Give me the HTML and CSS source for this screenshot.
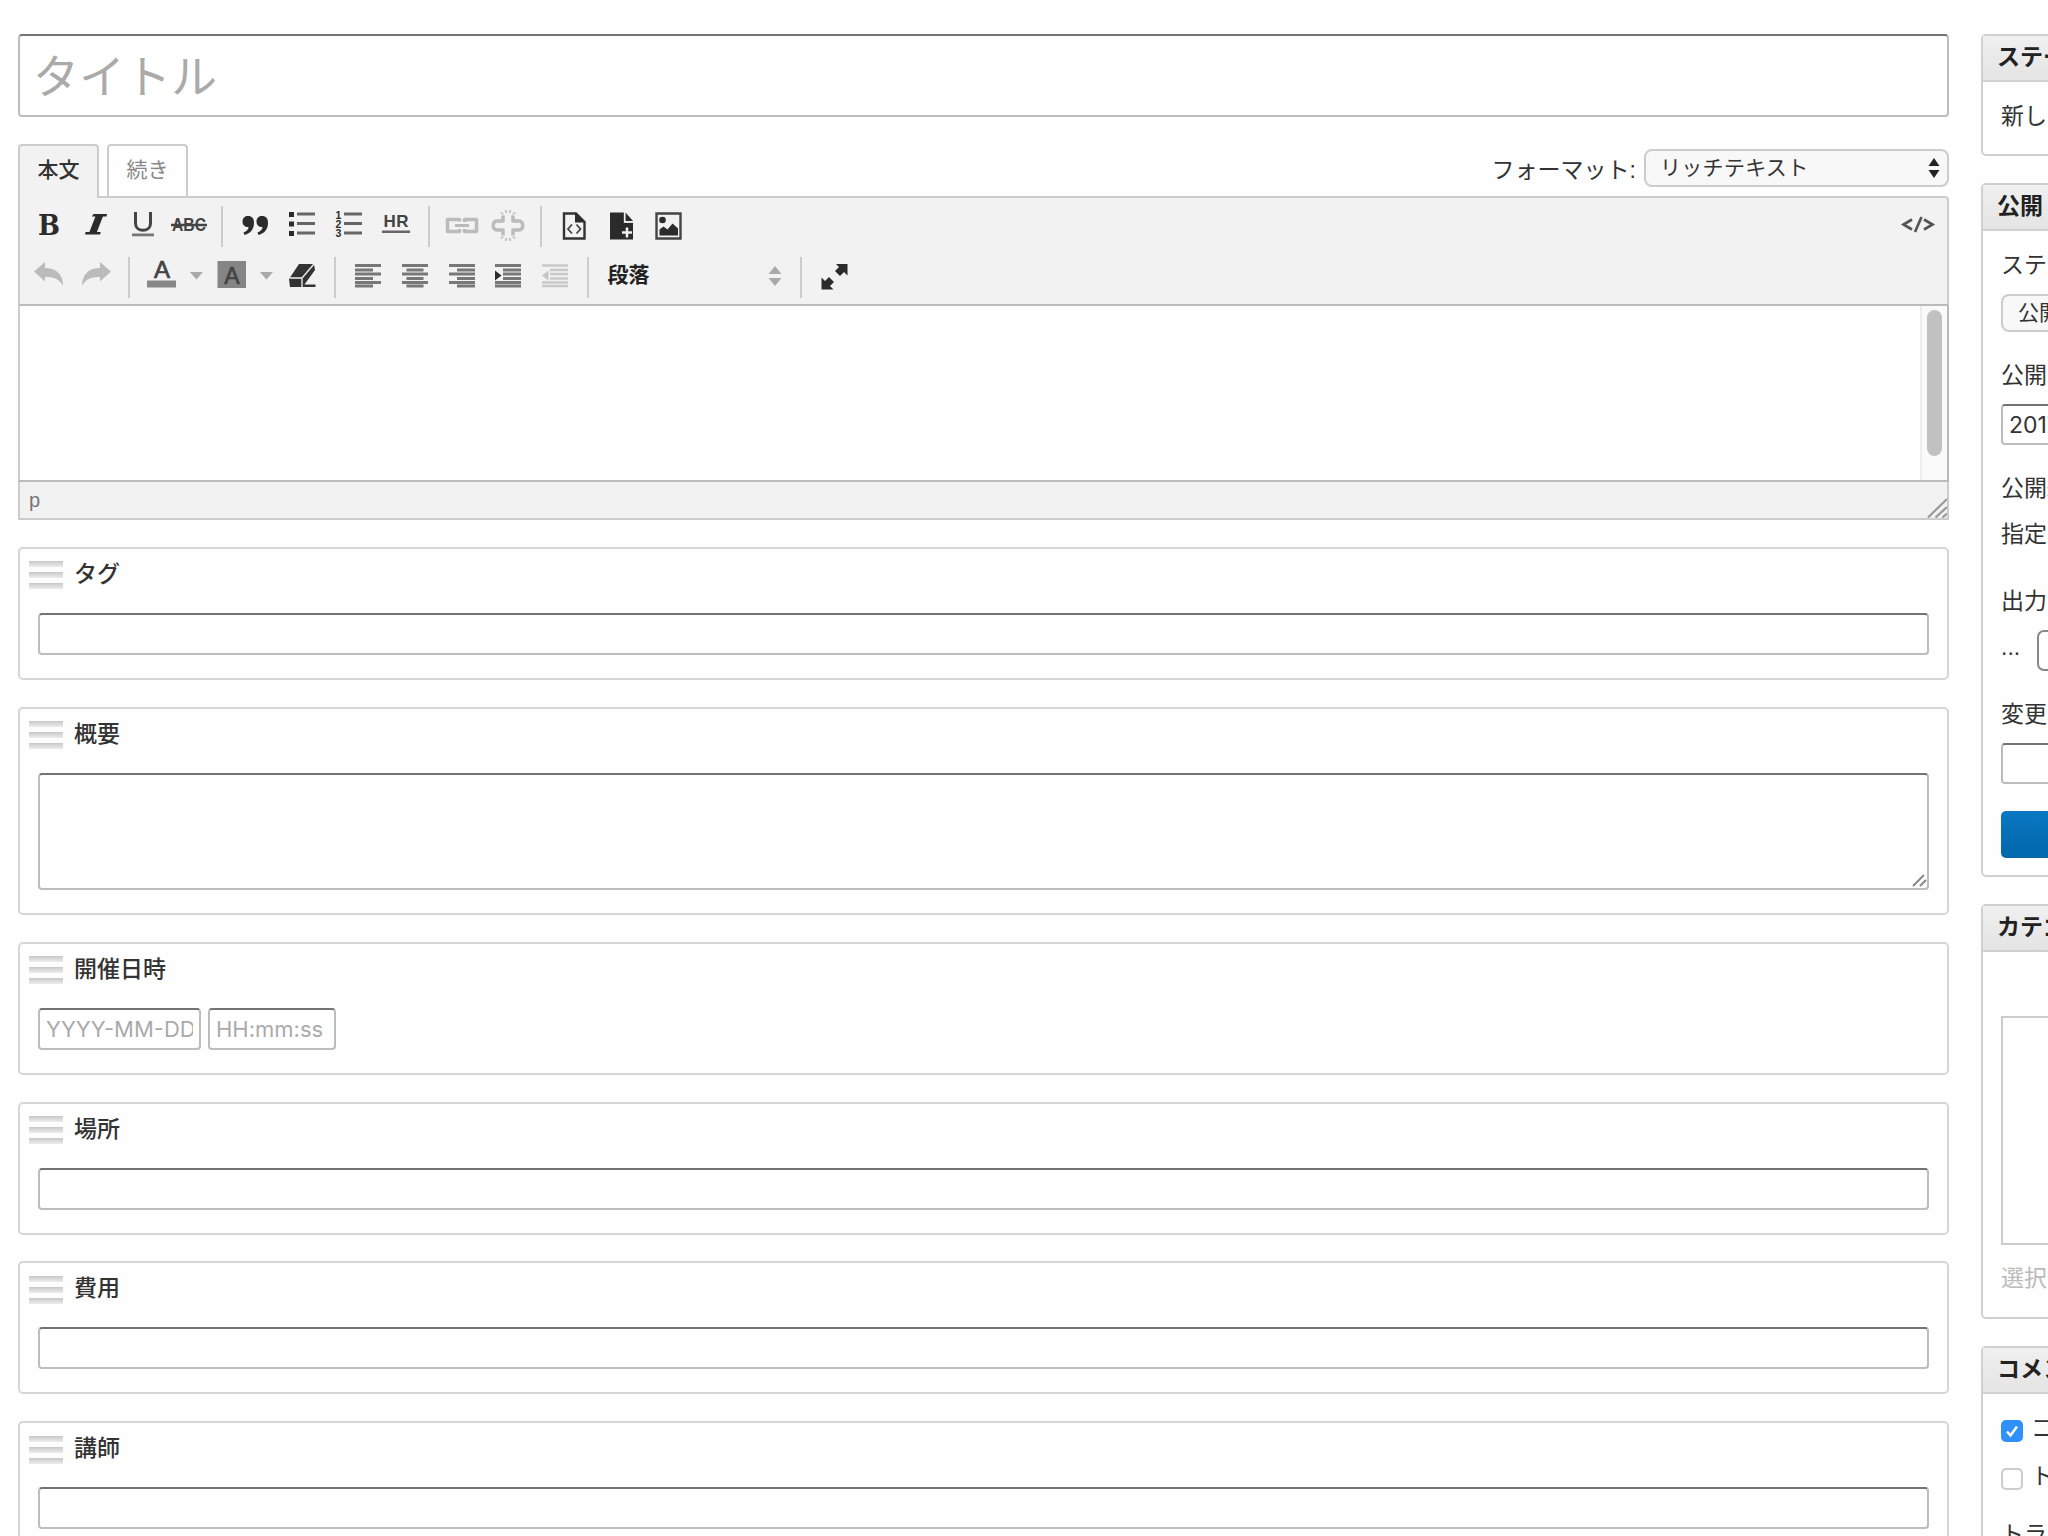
FILE: index.html
```
<!DOCTYPE html>
<html lang="ja">
<head>
    <meta charset="UTF-8">
    <title>記事の作成</title>
    <link rel="stylesheet" href="styles.css">
</head>
<body>
    <div class="container">
        <div class="main">
            <input type="text" class="title-input" placeholder="タイトル">

            <!-- Editor -->
            <div class="editor-head">
                <div class="tabs">
                    <div class="tab active">本文</div>
                    <div class="tab">続き</div>
                </div>
                <div class="format">
                    <span>フォーマット:</span>
                    <div class="select format-select">
                        <span>リッチテキスト</span>
                        <svg width="12" height="20" viewBox="0 0 12 20"><path d="M6 0l5.500 8h-11zM6 20l5.500-8h-11z" fill="#222"/></svg>
                    </div>
                </div>
            </div>
            <div class="editor">
                <div class="toolbar">
                    <div class="toolbar-row">
                        <div class="btn"><svg viewBox="0 0 36 36"><text x="18" y="27" class="serif" font-size="27" textLength="22" lengthAdjust="spacingAndGlyphs">B</text></svg></div>
                        <div class="btn"><svg viewBox="0 0 36 36"><path d="M15.500 6H29l-.5 2.500h-3.600l-6 15.500h3.800l-.6 2.500H7l.6-2.500h3.800l6-15.500h-3.500z"/></svg></div>
                        <div class="btn"><svg viewBox="0 0 36 36"><path d="M10.500 4v11.500c0 9 15 9 15 0V4" fill="none" stroke="#444" stroke-width="3"/><path d="M7 25.500h22v2.800H7z" fill="#777"/></svg></div>
                        <div class="btn"><svg viewBox="0 0 36 36"><text x="18" y="23" font-size="18" font-weight="bold" textLength="34" lengthAdjust="spacingAndGlyphs" fill="#444">ABC</text><path d="M0 15.800h36v2.400H0z" fill="#444"/></svg></div>
                        <div class="sep"></div>
                        <div class="btn"><svg viewBox="0 0 36 36"><path d="M11 8c4 0 6 2.500 6 7 0 6-3.500 10.500-9.500 12l-1-2.500c3-1 5-3 5-5.500-4 0-6-2-6-5.500S8 8 11 8zM25 8c4 0 6 2.500 6 7 0 6-3.500 10.500-9.500 12l-1-2.500c3-1 5-3 5-5.500-4 0-6-2-6-5.500S22 8 25 8z"/></svg></div>
                        <div class="btn"><svg viewBox="0 0 36 36"><path d="M5 4h5v5H5zM5 13.500h5v5H5zM5 23h5v5H5z"/><path d="M13 6h18M13 15.500h18M13 25h18" stroke="#666" stroke-width="2.800"/></svg></div>
                        <div class="btn"><svg viewBox="0 0 36 36"><text x="7.500" y="10.500" font-size="10.500" font-weight="bold">1</text><text x="7.500" y="19.500" font-size="10.500" font-weight="bold">2</text><text x="7.500" y="29" font-size="10.500" font-weight="bold">3</text><path d="M13 6h18M13 15.500h18M13 25h18" stroke="#666" stroke-width="2.800"/></svg></div>
                        <div class="btn"><svg viewBox="0 0 36 36"><text x="18" y="19" font-size="17" font-weight="bold" textLength="25" fill="#444">HR</text><path d="M4 22.500h28V25H4z" fill="#666"/></svg></div>
                        <div class="sep"></div>
                        <div class="btn disabled"><svg viewBox="0 0 36 36"><path d="M15.500 13.500V11.500H3.500v12h12V21M20.500 14V11.500h12v12h-12V21" fill="none" stroke="#bbb" stroke-width="3.500" stroke-linejoin="round"/><path d="M11 17.500h14" stroke="#bbb" stroke-width="3"/></svg></div>
                        <div class="btn disabled"><svg viewBox="0 0 36 36"><path d="M13 7.500v5.500H7c-5 0-5 9 0 9h6v5.500M23 7.500v5.500h6c5 0 5 9 0 9h-6v5.500" fill="none" stroke="#bbb" stroke-width="3.500" stroke-linejoin="round"/><path d="M10.500 4.500l3 2M15.500 2l1 3M20.500 2l-1 3M25.500 4.500l-3 2M10.500 30.500l3-2M15.500 33l1-3M20.500 33l-1-3M25.500 30.500l-3-2" stroke="#bbb" stroke-width="1.500"/></svg></div>
                        <div class="sep"></div>
                        <div class="btn"><svg viewBox="0 0 36 36"><path d="M8 5.500H20l8.500 8.500V30.500H8z" fill="none" stroke="#333" stroke-width="2.400"/><path d="M19 4.500v10h10z"/><path d="M16 16.500L12 21l4 4.500M20.500 16.500l4 4.500-4 4.500" fill="none" stroke="#444" stroke-width="1.800"/></svg></div>
                        <div class="btn"><svg viewBox="0 0 36 36"><path d="M7 4.500h14v10h9v17H7z"/><path d="M22.500 4.500l7.500 8.500h-7.500z"/><path d="M21.500 4v10h9" fill="none" stroke="#f2f2f2" stroke-width="1.300"/><path d="M24 19.500v10M19 24.500h10" stroke="#f2f2f2" stroke-width="2.500"/></svg></div>
                        <div class="btn"><svg viewBox="0 0 36 36"><path d="M6.500 5.500h24v25h-24z" fill="none" stroke="#444" stroke-width="2.400"/><circle cx="12.500" cy="12" r="3.300"/><path d="M9.500 27.500v-6l4-3 4 3 5-6 5.500 5v7z"/></svg></div>
                        <div class="btn source"><svg viewBox="0 0 36 36"><path d="M12 11.500L3.500 16.500l8.500 5M24 11.500l8.500 5-8.500 5M21.500 9l-6.500 15" fill="none" stroke="#555" stroke-width="2.700"/></svg></div>
                    </div>
                    <div class="toolbar-row second">
                        <div class="btn disabled"><svg viewBox="0 0 36 36"><path d="M3 12.500L14 3v6c12 0 18 7 18 18-4-7-8-9-18-9v4.500z" fill="#bbb"/></svg></div>
                        <div class="btn disabled"><svg viewBox="0 0 36 36"><path d="M33 12.500L22 3v6C10 9 4 16 4 27c4-7 8-9 18-9v4.500z" fill="#bbb"/></svg></div>
                        <div class="sep"></div>
                        <div class="btn"><svg viewBox="0 0 36 36"><text x="18" y="18.500" font-size="24" fill="#444" stroke="#444" stroke-width=".7">A</text><path d="M3 21.500h29v7H3z" fill="#888"/></svg></div>
                        <div class="caret"></div>
                        <div class="btn"><svg viewBox="0 0 36 36"><path d="M3.500 2h28.500v27H3.500z" fill="#858585"/><text x="18" y="24.500" font-size="23" fill="#444" stroke="#444" stroke-width=".7">A</text></svg></div>
                        <div class="caret"></div>
                        <div class="btn"><svg viewBox="0 0 36 36"><path d="M15 5h15l1 6-10.500 14.500h11V28H6l-1-8z" fill="#333"/><path d="M5.500 19H18l12-14M18 19v9" fill="none" stroke="#f2f2f2" stroke-width="1.300"/></svg></div>
                        <div class="sep"></div>
                        <div class="btn"><svg viewBox="0 0 36 36"><path d="M5 6.500h26M5 11h18M5 15h26M5 19.500h18M5 23.500h26M5 27h18" stroke="#777" stroke-width="2.800"/></svg></div>
                        <div class="btn"><svg viewBox="0 0 36 36"><path d="M5 6.500h26M9.500 11h17M5 15h26M9.500 19.500h17M5 23.500h26M9.500 27h17" stroke="#777" stroke-width="2.800"/></svg></div>
                        <div class="btn"><svg viewBox="0 0 36 36"><path d="M5 6.500h26M13 11h18M5 15h26M13 19.500h18M5 23.500h26M13 27h18" stroke="#777" stroke-width="2.800"/></svg></div>
                        <div class="btn"><svg viewBox="0 0 36 36"><path d="M5 6.500h26M13 11h18M13 15h18M13 19.500h18M5 23.500h26M5 27h26" stroke="#777" stroke-width="2.800"/><path d="M5 11.500l6.500 5-6.500 5z"/></svg></div>
                        <div class="btn disabled"><svg viewBox="0 0 36 36"><path d="M5 6.500h26M13 11h18M13 15h18M13 19.500h18M5 23.500h26M5 27h26" stroke="#c9c9c9" stroke-width="2.600"/><path d="M11.500 11.500l-6.500 5 6.500 5z" fill="#c4c4c4"/></svg></div>
                        <div class="sep"></div>
                        <div class="block-select">
                            <span>段落</span>
                            <svg width="14" height="20" viewBox="0 0 14 20"><path d="M7 0l6.500 8H.5zM7 20l6.500-8H.5z" fill="#aaa"/></svg>
                        </div>
                        <div class="sep"></div>
                        <div class="btn"><svg viewBox="0 0 36 36"><path d="M20 5h11.500v11.500L28 13l-4 4-5-5 4-4zM5.500 18.500L9 22l4-4 5 5-4 4 3.500 3.500h-12z"/></svg></div>
                    </div>
                </div>
                <div class="editor-body">
                    <div class="scrollbar"><div class="thumb"></div></div>
                </div>
                <div class="statusbar">
                    <span>p</span>
                    <svg width="20" height="20" viewBox="0 0 20 20"><path d="M1 19.500L20 1M8.500 19.500L20 9M15.500 19.500L20 15.500" stroke="#999" stroke-width="2.200"/></svg>
                </div>
            </div>

            <!-- Custom fields -->
            <div class="card">
                <div class="card-header"><div class="handle"><i></i><i></i><i></i></div>タグ</div>
                <input type="text">
            </div>
            <div class="card">
                <div class="card-header"><div class="handle"><i></i><i></i><i></i></div>概要</div>
                <div class="textarea">
                    <svg width="15" height="15" viewBox="0 0 15 15"><path d="M1 13L12 2M8 13l6-6" stroke="#888" stroke-width="2"/></svg>
                </div>
            </div>
            <div class="card">
                <div class="card-header"><div class="handle"><i></i><i></i><i></i></div>開催日時</div>
                <div class="datetime">
                    <input type="text" class="date" placeholder="YYYY-MM-DD">
                    <input type="text" class="time" placeholder="HH:mm:ss">
                </div>
            </div>
            <div class="card">
                <div class="card-header"><div class="handle"><i></i><i></i><i></i></div>場所</div>
                <input type="text">
            </div>
            <div class="card">
                <div class="card-header"><div class="handle"><i></i><i></i><i></i></div>費用</div>
                <input type="text">
            </div>
            <div class="card">
                <div class="card-header"><div class="handle"><i></i><i></i><i></i></div>講師</div>
                <input type="text">
            </div>
        </div>

        <!-- Sidebar -->
        <div class="sidebar">
            <div class="widget status">
                <div class="widget-header">ステータス</div>
                <div class="widget-content">新しい記事</div>
            </div>
            <div class="widget publish">
                <div class="widget-header">公開</div>
                <div class="widget-content">
                    <div class="field">
                        <label>ステータス</label>
                        <div class="select">公開</div>
                    </div>
                    <div class="field">
                        <label>公開日</label>
                        <input type="text" value="2017-01-01">
                    </div>
                    <div class="field">
                        <label>公開終了日</label>
                        <p>指定なし</p>
                    </div>
                    <div class="field">
                        <label>出力ファイル名</label>
                        <div class="filename">
                            <span>...</span>
                            <div class="filename-box"></div>
                        </div>
                    </div>
                    <div class="field">
                        <label>変更メモ</label>
                        <input type="text">
                    </div>
                    <div class="save"></div>
                </div>
            </div>
            <div class="widget category">
                <div class="widget-header">カテゴリ</div>
                <div class="widget-content">
                    <div class="category-list"></div>
                    <div class="hint">選択</div>
                </div>
            </div>
            <div class="widget comment">
                <div class="widget-header">コメント</div>
                <div class="widget-content">
                    <div class="check">
                        <span class="box checked"><svg width="22" height="22" viewBox="0 0 22 22"><path d="M6 11.500l3.500 4L16 6.500" fill="none" stroke="#fff" stroke-width="2.500"/></svg></span>コメントを許可
                    </div>
                    <div class="check"><span class="box"></span>トラックバックを許可</div>
                    <div class="trackback">トラックバック送信先</div>
                </div>
            </div>
        </div>
    </div>
</body>
</html>
```
FILE: styles.css
```
* {
    box-sizing: border-box;
}
body {
    font-family: "Liberation Sans", "Noto Sans CJK JP", sans-serif;
    font-size: 23px;
    margin: 0;
    color: #333;
    background-color: #fefefe;
}
.container {
    display: flex;
    gap: 32px;
    height: 1536px;
    overflow: hidden;
    padding: 34px 0 0 18px;
}
.main {
    width: 1931px;
    flex: none;
}
.sidebar {
    width: 400px;
    flex: none;
}
input, .textarea {
    display: block;
    width: 100%;
    height: 42px;
    margin: 0;
    padding: 0 6px;
    font-family: Inter, "Noto Sans CJK JP", sans-serif;
    font-size: 22px;
    color: #333;
    background-color: #fff;
    border: 2px solid #bdbdbd;
    border-top-color: #737373;
    border-radius: 4px;
}
input::placeholder {
    color: #aaa;
}
.title-input {
    height: 83px;
    padding: 0 13px;
    font-size: 46px;
}

/* Editor */
.editor-head {
    display: flex;
    justify-content: space-between;
    margin-top: 27px;
    height: 52px;
}
.tabs {
    display: flex;
    gap: 8px;
}
.tab {
    width: 81px;
    height: 52px;
    font-size: 21px;
    line-height: 47px;
    text-align: center;
    color: #888;
    border: 2px solid #ccc;
    border-bottom: none;
    border-radius: 4px 4px 0 0;
}
.tab.active {
    height: 54px;
    color: #333;
    font-weight: 500;
    background-color: #f2f2f2;
    z-index: 1;
}
.format {
    display: flex;
    align-items: center;
    gap: 8px;
    height: 48px;
}
.select {
    display: flex;
    align-items: center;
    justify-content: space-between;
    height: 38px;
    padding: 0 7px 0 15px;
    font-size: 21px;
    line-height: 34px;
    background-color: #f8f8f8;
    border: 2px solid #ccc;
    border-radius: 8px;
}
.format-select {
    width: 305px;
    padding-left: 14px;
}
.format-select span {
    letter-spacing: .3px;
}
.toolbar {
    height: 110px;
    padding: 2px 6px 0;
    background-color: #f2f2f2;
    border: 2px solid #ccc;
    border-bottom-color: #bbb;
    border-radius: 0 4px 0 0;
}
.toolbar-row {
    display: flex;
    align-items: center;
    height: 52px;
}
.toolbar-row.second {
    height: 50px;
}
.btn {
    display: flex;
    align-items: center;
    justify-content: center;
    width: 46.7px;
    flex: none;
}
.btn svg {
    width: 36px;
    height: 36px;
    fill: #2b2b2b;
}
.btn text {
    text-anchor: middle;
    font-family: "Liberation Sans", sans-serif;
}
.btn .serif {
    font-family: "DejaVu Serif", serif;
    font-weight: bold;
}
.source {
    margin-left: auto;
}
.sep {
    width: 2px;
    height: 41px;
    margin: 0 8.700px;
    flex: none;
    background-color: #ccc;
}
.caret {
    width: 23.300px;
    height: 8px;
    margin-top: -3px;
    flex: none;
    background-color: #aaa;
    clip-path: polygon(4px 0, 18px 0, 11px 8px);
}
.block-select {
    display: flex;
    align-items: center;
    justify-content: space-between;
    width: 194px;
    padding: 0 10px;
    font-size: 21px;
    font-weight: bold;
    line-height: 30px;
    color: #222;
}
.block-select span {
    padding-bottom: 4px;
}
.block-select svg {
    margin-top: -3px;
}
.editor-body {
    display: flex;
    justify-content: flex-end;
    height: 176px;
    background-color: #fff;
    border: 2px solid #bbb;
    border-top: none;
    border-left-color: #ccc;
}
.scrollbar {
    width: 27px;
    padding: 4px 5px 0;
    background-color: #fafafa;
    border-left: 2px solid #eee;
}
.thumb {
    width: 15px;
    height: 146px;
    border-radius: 8px;
    background-color: #c1c1c1;
}
.statusbar {
    display: flex;
    justify-content: space-between;
    align-items: flex-end;
    height: 38px;
    padding-left: 9px;
    font-size: 20px;
    line-height: 35px;
    color: #777;
    background-color: #f2f2f2;
    border: 2px solid #ccc;
    border-top: none;
}

/* Custom fields */
.card {
    height: 133px;
    margin-top: 26.800px;
    padding: 9px 18px 0;
    border: 2px solid #d6d6d6;
    border-radius: 5px;
}
.card-header {
    display: flex;
    align-items: center;
    height: 32px;
    margin: 0 0 23px -9px;
    line-height: 32px;
    font-weight: 500;
}
.handle {
    display: flex;
    flex-direction: column;
    gap: 5px;
    width: 34px;
    margin: 3px 11px 0 0;
}
.handle i {
    height: 6px;
    background: linear-gradient(#c8c8c8, #ededed);
}
.card:has(.textarea) {
    height: 208.500px;
}
.textarea {
    display: flex;
    justify-content: flex-end;
    align-items: flex-end;
    height: 117px;
    padding: 0;
}
.datetime {
    display: flex;
    gap: 7px;
}
.date {
    width: 163px;
}
.time {
    width: 128px;
}

/* Sidebar */
.widget {
    margin-bottom: 27px;
    border: 2px solid #d0d0d0;
    border-radius: 5px;
}
.widget-header {
    height: 46px;
    padding-left: 14px;
    font-weight: bold;
    line-height: 42px;
    color: #222;
    background: linear-gradient(#f0f0f0, #e4e4e4);
    border-bottom: 2px solid #d0d0d0;
}
.widget-content {
    padding: 19px 18px 0;
}
.status {
    height: 122px;
}
.status .widget-content {
    padding-top: 16px;
    line-height: 36px;
}
.publish {
    height: 694px;
}
.field {
    margin-bottom: 28px;
}
.field label {
    display: block;
    height: 30px;
    margin-bottom: 14px;
    line-height: 30px;
}
.field input {
    height: 41px;
    font-size: 23px;
}
.field p {
    height: 41px;
    margin: 0;
    line-height: 35px;
}
.filename {
    display: flex;
    align-items: center;
    gap: 17px;
    height: 41px;
}
.filename span {
    padding-bottom: 7px;
}
.filename-box {
    flex: 1;
    height: 41px;
    border: 2px solid #888;
    border-radius: 7px;
}
.save {
    height: 47px;
    margin-top: -1px;
    border-radius: 5px;
    background: linear-gradient(#0a78c2, #0067ab);
}
.category {
    height: 415px;
}
.category .widget-content {
    padding-top: 64px;
}
.category-list {
    height: 229px;
    border: 2px solid #ccc;
}
.hint {
    margin-top: 16px;
    line-height: 34px;
    color: #bbb;
}
.comment {
    height: 300px;
}
.comment .widget-content {
    padding-top: 20px;
}
.check {
    display: flex;
    align-items: center;
    gap: 8px;
    height: 30px;
    margin-bottom: 18px;
    line-height: 26px;
    padding-bottom: 2px;
}
.box {
    width: 22px;
    height: 22px;
    margin-top: 6px;
    border: 2px solid #ccc;
    border-radius: 5px;
}
.box.checked {
    border: none;
    background-color: #2f8ffb;
}
.box svg {
    display: block;
}
.trackback {
    margin-top: 25px;
    line-height: 34px;
}
```
